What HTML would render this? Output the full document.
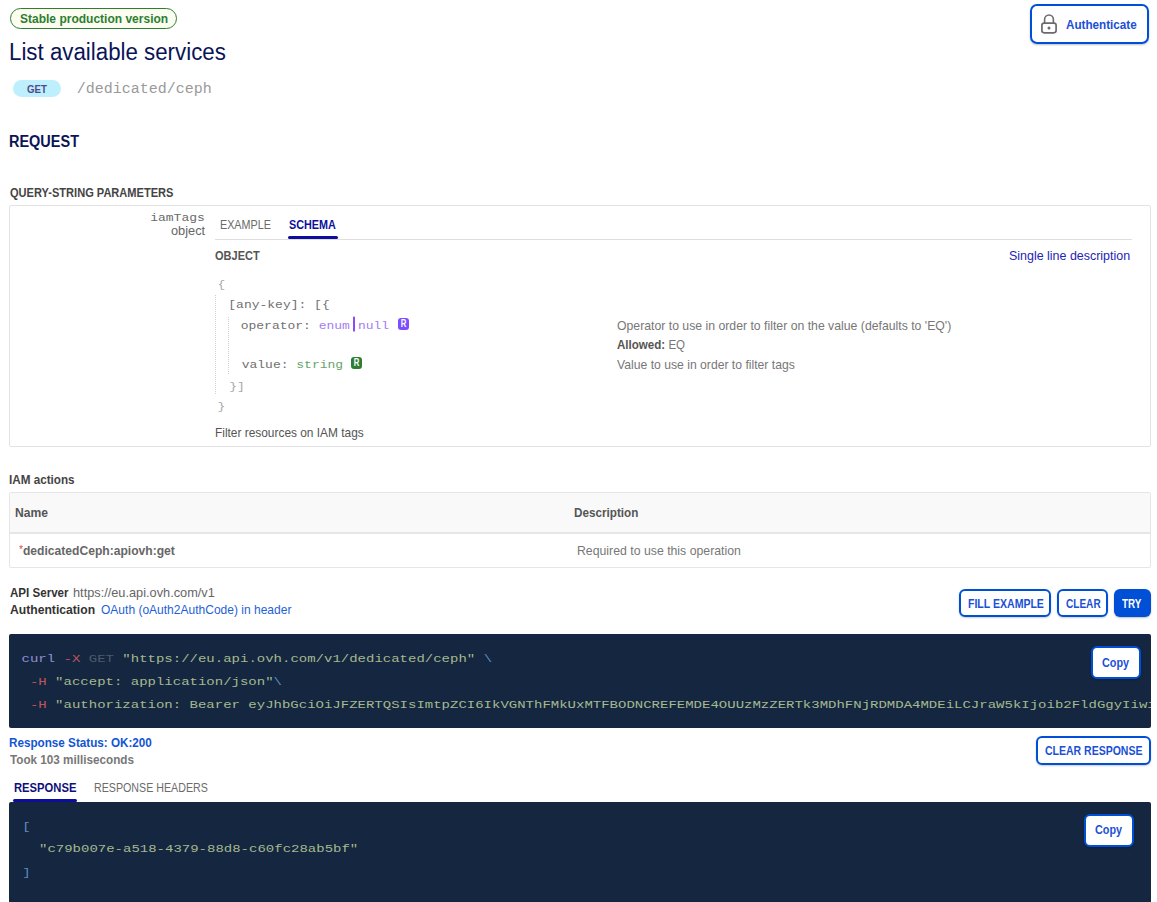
<!DOCTYPE html>
<html><head><meta charset="utf-8"><style>
html,body{margin:0;padding:0;background:#fff;width:1157px;height:902px;overflow:hidden;position:relative}
body{font-family:"Liberation Sans",sans-serif;color:#333}
.box{position:absolute;box-sizing:content-box}
.t{position:absolute;white-space:nowrap;line-height:1;transform-origin:0 0}
.tr{transform-origin:100% 0}
.m{font-family:"Liberation Mono",monospace;white-space:pre}
.btn{border:2px solid #0050d7;border-radius:6px;background:#fff;box-shadow:0 1px 2px rgba(0,0,0,.2)}
.rb{width:11px;height:12px;border-radius:3px;color:#fff;font:bold 10px/12.5px "Liberation Sans",sans-serif;text-align:center}
.rb span{display:inline-block;transform:scaleX(.78)}
.bar{display:inline-block;width:2px;height:18px;background:#8a4cf5;vertical-align:-3px;margin:0 3px 0 3px}
.dk{opacity:.82}
.bl{display:inline-block;width:0;height:0;vertical-align:baseline}
</style></head><body>

<div class="box" style="left:10px;top:8px;width:165px;height:19px;border:1px solid #2e7d32;border-radius:11px;background:#fafdf0"></div>
<div class="box" style="left:1030px;top:4px;width:115px;height:36px;border:2px solid #0050d7;border-radius:7px;box-shadow:0 1px 2px rgba(0,0,0,.25)"></div>
<svg class="box" style="left:1040px;top:13px" width="18" height="22" viewBox="0 0 18 22">
  <path d="M4.6 10.2 V6.4 a4.4 4.4 0 0 1 8.8 0 V10.2" fill="none" stroke="#6b6b6b" stroke-width="1.6"/>
  <rect x="1.9" y="10.1" width="14.2" height="9.7" rx="2.2" fill="none" stroke="#6b6b6b" stroke-width="1.7"/>
  <circle cx="9" cy="14.9" r="1.5" fill="#6b6b6b"/>
</svg>
<div class="box" style="left:13px;top:80px;width:48px;height:17px;border-radius:9px;background:#bdf0fc"></div>

<div class="box" style="left:9px;top:205px;width:1140px;height:240px;border:1px solid #e3e3e3;border-radius:2px"></div>
<div class="box" style="left:215px;top:239px;width:917px;height:1px;background:#dedede"></div>
<div class="box" style="left:288px;top:236px;width:50px;height:3px;border-radius:2px;background:#0d0f9c"></div>
<div class="box" style="left:215px;top:295px;width:0;height:99px;border-left:1px dotted #cfcfcf"></div>
<div class="box" style="left:228px;top:317px;width:0;height:57px;border-left:1px dotted #cfcfcf"></div>
<div class="box rb" style="left:398px;top:318px;background:#7c4dff"><span>R</span></div>
<div class="box rb" style="left:351px;top:357px;background:#2e7d32"><span>R</span></div>

<div class="box" style="left:9px;top:492px;width:1140px;height:74px;border:1px solid #e6e6e6;border-radius:2px"></div>
<div class="box" style="left:10px;top:493px;width:1140px;height:39px;background:#f9f9f9;border-bottom:2px solid #e6e6e6"></div>

<div class="box btn" style="left:959px;top:589px;width:88px;height:24px"></div>
<div class="box btn" style="left:1057px;top:589px;width:47px;height:24px"></div>
<div class="box" style="left:1114px;top:589px;width:37px;height:28px;border-radius:6px;background:#0050d7;box-shadow:0 1px 2px rgba(0,0,0,.25)"></div>

<div class="box" style="left:9px;top:634px;width:1142px;height:94px;background:#142640;border-radius:2px"></div>
<div class="box btn" style="left:1091px;top:646px;width:46px;height:29px;background:#fff;border-radius:6px"></div>

<div class="box btn" style="left:1036px;top:736px;width:111px;height:25px"></div>
<div class="box" style="left:13px;top:799px;width:64px;height:3px;border-radius:2px;background:#0d0f9c"></div>
<div class="box" style="left:9px;top:802px;width:1142px;height:110px;background:#142640;border-radius:2px"></div>
<div class="box btn" style="left:1084px;top:814px;width:46px;height:29px;background:#fff;border-radius:6px"></div>

<div class="t" style="left:19.50px;top:11.90px;font-size:13.5px;font-weight:700;color:#2e7d32;transform:scaleX(0.8898)">Stable production version</div>
<div class="t" style="left:8.86px;top:41.00px;font-size:23.0px;font-weight:400;color:#0a1457;transform:scaleX(0.9692)">List available services</div>
<div class="t" style="left:1065.80px;top:18.70px;font-size:12.6px;font-weight:700;color:#1a4fd6;transform:scaleX(0.9276)">Authenticate</div>
<div class="t" style="left:26.90px;top:83.70px;font-size:11px;font-weight:700;color:#4f4a8a;transform:scaleX(0.8826)">GET</div>
<div class="t" style="left:9.07px;top:132.80px;font-size:17.4px;font-weight:700;color:#0a1457;transform:scaleX(0.8325)">REQUEST</div>
<div class="t" style="left:10.00px;top:186.00px;font-size:13.5px;font-weight:700;color:#444444;transform:scaleX(0.8191)">QUERY-STRING PARAMETERS</div>
<div class="t" style="left:171.10px;top:224.40px;font-size:13.2px;font-weight:400;color:#666666;transform:scaleX(0.9686)">object</div>
<div class="t" style="left:219.54px;top:218.90px;font-size:12.6px;font-weight:400;color:#6b6b6b;transform:scaleX(0.8552)">EXAMPLE</div>
<div class="t" style="left:289.40px;top:218.90px;font-size:12.6px;font-weight:700;color:#0d0f9c;transform:scaleX(0.8582)">SCHEMA</div>
<div class="t" style="left:215.00px;top:250.00px;font-size:12.6px;font-weight:700;color:#555555;transform:scaleX(0.8745)">OBJECT</div>
<div class="t" style="left:1009.04px;top:248.50px;font-size:13px;font-weight:400;color:#2525b5;transform:scaleX(0.9576)">Single line description</div>
<div class="t" style="left:617.00px;top:319.20px;font-size:13px;font-weight:400;color:#777777;transform:scaleX(0.9424)">Operator to use in order to filter on the value (defaults to 'EQ')</div>
<div class="t" style="left:617.00px;top:337.90px;font-size:13px;font-weight:400;color:#777777;transform:scaleX(0.8895)"><b style="color:#555">Allowed:</b> EQ</div>
<div class="t" style="left:617.00px;top:358.10px;font-size:13px;font-weight:400;color:#777777;transform:scaleX(0.9368)">Value to use in order to filter tags</div>
<div class="t" style="left:214.59px;top:425.60px;font-size:13px;font-weight:400;color:#555555;transform:scaleX(0.9149)">Filter resources on IAM tags</div>
<div class="t" style="left:9.10px;top:472.90px;font-size:13px;font-weight:700;color:#444444;transform:scaleX(0.8986)">IAM actions</div>
<div class="t" style="left:14.64px;top:506.60px;font-size:12.6px;font-weight:700;color:#555555;transform:scaleX(0.9606)">Name</div>
<div class="t" style="left:573.87px;top:506.60px;font-size:12.6px;font-weight:700;color:#555555;transform:scaleX(0.9294)">Description</div>
<div class="t" style="left:18.70px;top:543.50px;font-size:13px;font-weight:700;color:#666666;transform:scaleX(0.9304)"><span style="color:#e0473a;font-weight:400;font-size:11px;vertical-align:2px">*</span>dedicatedCeph:apiovh:get</div>
<div class="t" style="left:576.96px;top:543.50px;font-size:13px;font-weight:400;color:#777777;transform:scaleX(0.9448)">Required to use this operation</div>
<div class="t" style="left:9.50px;top:586.00px;font-size:13px;font-weight:700;color:#333333;transform:scaleX(0.8894)">API Server</div>
<div class="t" style="left:73.42px;top:586.00px;font-size:13px;font-weight:400;color:#666666;transform:scaleX(0.9811)">https://eu.api.ovh.com/v1</div>
<div class="t" style="left:9.50px;top:602.90px;font-size:13px;font-weight:700;color:#333333;transform:scaleX(0.9352)">Authentication</div>
<div class="t" style="left:100.60px;top:602.90px;font-size:13px;font-weight:400;color:#1f5fd6;transform:scaleX(0.9243)">OAuth (oAuth2AuthCode) in header</div>
<div class="t" style="left:967.66px;top:597.80px;font-size:12.5px;font-weight:700;color:#1a4fd6;transform:scaleX(0.8427)">FILL EXAMPLE</div>
<div class="t" style="left:1065.60px;top:597.80px;font-size:12.5px;font-weight:700;color:#1a4fd6;transform:scaleX(0.8047)">CLEAR</div>
<div class="t" style="left:1122.30px;top:597.80px;font-size:12.5px;font-weight:700;color:#ffffff;transform:scaleX(0.7880)">TRY</div>
<div class="t" style="left:1102.00px;top:657.00px;font-size:12.8px;font-weight:700;color:#1a4fd6;transform:scaleX(0.8469)">Copy</div>
<div class="t" style="left:1045.00px;top:744.90px;font-size:12.5px;font-weight:700;color:#1a4fd6;transform:scaleX(0.8397)">CLEAR RESPONSE</div>
<div class="t" style="left:9.00px;top:735.80px;font-size:13px;font-weight:700;color:#1255d4;transform:scaleX(0.8987)">Response Status: OK:200</div>
<div class="t" style="left:10.00px;top:752.80px;font-size:13px;font-weight:700;color:#777777;transform:scaleX(0.9000)">Took 103 milliseconds</div>
<div class="t" style="left:13.61px;top:781.80px;font-size:12.6px;font-weight:700;color:#0d0f7c;transform:scaleX(0.8913)">RESPONSE</div>
<div class="t" style="left:93.95px;top:781.80px;font-size:12.6px;font-weight:400;color:#6b6b6b;transform:scaleX(0.8474)">RESPONSE HEADERS</div>
<div class="t" style="left:1094.90px;top:824.40px;font-size:12.8px;font-weight:700;color:#1a4fd6;transform:scaleX(0.8469)">Copy</div>
<div class="t m" style="left:76.80px;top:81.70px;font-size:15px;color:#9a9a9a;transform-origin:0 11.00px;transform:scaleY(0.92)">/dedicated/ceph</div>
<div class="t m" style="left:150.20px;top:211.00px;font-size:13px;color:#6a6a6a;transform-origin:0 10.00px;transform:scaleY(0.88)">iamTags</div>
<div class="t m" style="left:217.50px;top:277.80px;font-size:13px;color:#a8a8a8;transform-origin:0 10.00px;transform:scaleY(0.82)">{</div>
<div class="t m" style="left:228.30px;top:298.00px;font-size:13px;color:#707070;transform-origin:0 10.00px;transform:scaleY(0.82)">[any-key]: [{</div>
<div class="t m" style="left:240.70px;top:314.00px;font-size:13px;color:#707070;transform-origin:0 15.00px;transform:scaleY(0.82)">operator: <span style="color:#a47cf3">enum</span><span class="bar"></span><span style="color:#a47cf3">null</span></div>
<div class="t m" style="left:241.70px;top:358.00px;font-size:13px;color:#707070;transform-origin:0 10.00px;transform:scaleY(0.82)">value: <span style="color:#6aa36a">string</span></div>
<div class="t m" style="left:229.30px;top:379.80px;font-size:13px;color:#a8a8a8;transform-origin:0 10.00px;transform:scaleY(0.82)">}]</div>
<div class="t m" style="left:217.50px;top:399.80px;font-size:13px;color:#a8a8a8;transform-origin:0 10.00px;transform:scaleY(0.82)">}</div>
<div class="t m dk" style="left:21.50px;top:651.00px;font-size:14px;color:#c5d9a0;transform-origin:0 11.00px;transform:scaleY(0.76)"><span style="color:#a9a9ec">curl</span> <span style="color:#e06262">-X</span> <span style="color:#5d6573">GET</span> "https://eu.api.ovh.com/v1/dedicated/ceph" <span style="color:#6fa3dc">\</span></div>
<div class="t m dk" style="left:21.50px;top:674.00px;font-size:14px;color:#c5d9a0;transform-origin:0 11.00px;transform:scaleY(0.76)"> <span style="color:#e06262">-H</span> "accept: application/json"<span style="color:#6fa3dc">\</span></div>
<div class="t m dk" style="left:21.50px;top:696.80px;width:1129.00px;overflow:hidden;font-size:14px;color:#c5d9a0;transform-origin:0 11.00px;transform:scaleY(0.76)"> <span style="color:#e06262">-H</span> "authorization: Bearer eyJhbGciOiJFZERTQSIsImtpZCI6IkVGNThFMkUxMTFBODNCREFEMDE4OUUzMzZERTk3MDhFNjRDMDA4MDEiLCJraW5kIjoib2FldGgyIiwiaXNzIjoiZXUuYXBpLm92aC5jb20i"</div>
<div class="t m dk" style="left:22.20px;top:818.50px;font-size:14px;color:#6fa3dc;transform-origin:0 11.00px;transform:scaleY(0.76)">[</div>
<div class="t m dk" style="left:22.20px;top:841.00px;font-size:14px;color:#c5d9a0;transform-origin:0 11.00px;transform:scaleY(0.76)">  "c79b007e-a518-4379-88d8-c60fc28ab5bf"</div>
<div class="t m dk" style="left:22.20px;top:864.50px;font-size:14px;color:#6fa3dc;transform-origin:0 11.00px;transform:scaleY(0.76)">]</div>
</body></html>
